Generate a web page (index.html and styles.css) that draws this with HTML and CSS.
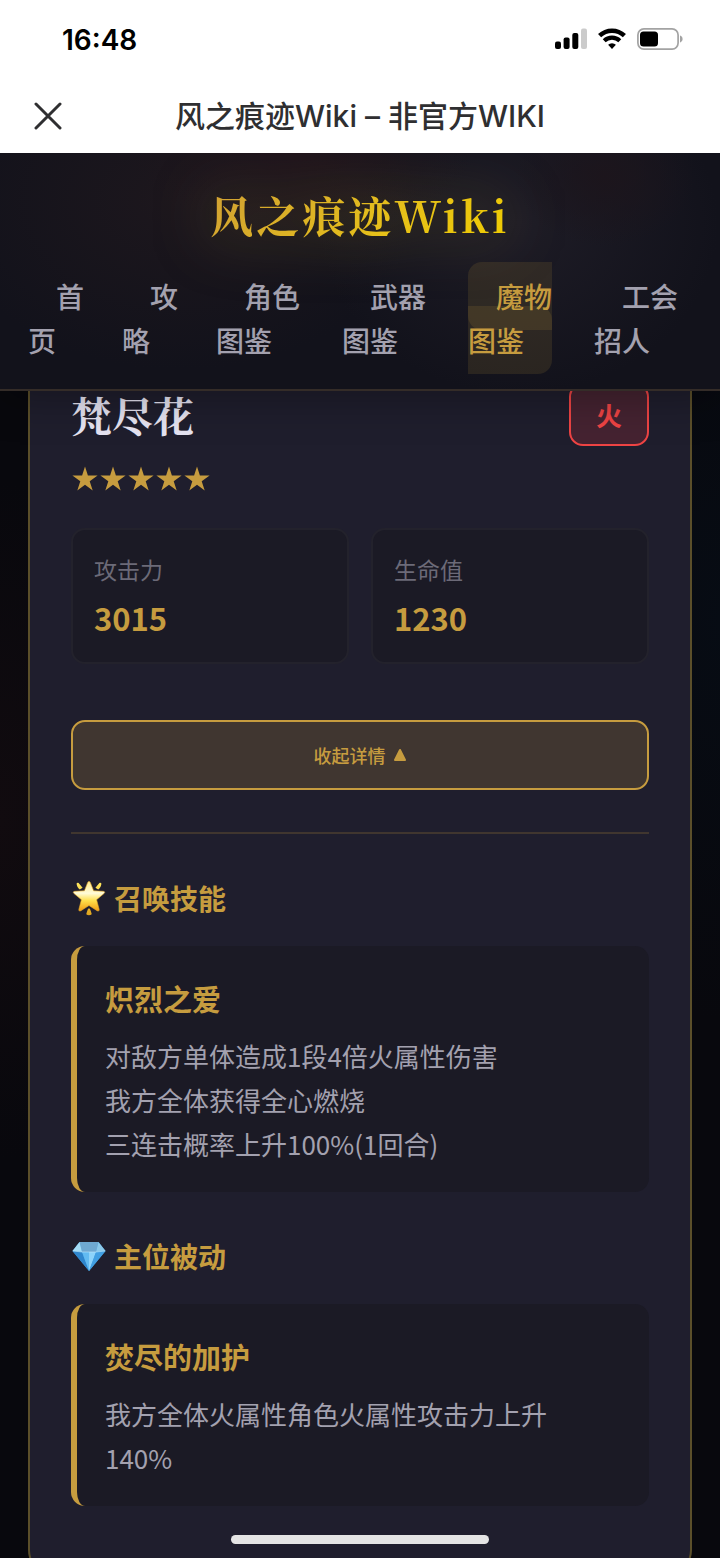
FILE: index.html
```html
<!DOCTYPE html>
<html lang="zh-CN">
<head>
<meta charset="utf-8">
<meta name="viewport" content="width=device-width, initial-scale=1">
<title>风之痕迹Wiki – 非官方WIKI</title>
<link rel="stylesheet" href="styles.css">
</head>
<body>
<div class="shell">
  <div class="status-bar">
    <span class="clock">16:48</span>
    <div class="indicators">
      <svg class="signal" width="32" height="22" viewBox="0 0 32 22" aria-hidden="true">
        <rect x="0" y="13.500" width="6" height="7.500" rx="2"/>
        <rect x="8.600" y="9.500" width="6" height="11.500" rx="2"/>
        <rect x="17.300" y="5" width="6" height="16" rx="2"/>
        <rect x="26" y="0.500" width="6" height="20.500" rx="2" fill="#cbcbcb"/>
      </svg>
      <svg class="wifi" width="28" height="22" viewBox="0 0 28 22" fill="none" stroke="#000" aria-hidden="true">
        <path d="M1.600 7.600a18 18 0 0 1 24.800 0" stroke-width="4.500"/>
        <path d="M6.200 12.700a11.300 11.300 0 0 1 15.600 0" stroke-width="4.200"/>
        <path d="M14 21l-3.900-4.200a5.700 5.700 0 0 1 7.800 0z" fill="#000" stroke="none"/>
      </svg>
      <svg class="battery" width="46" height="22" viewBox="0 0 46 22" aria-hidden="true">
        <rect x="0.900" y="0.900" width="40.200" height="20.200" rx="6" fill="none" stroke="#a3a3a3" stroke-width="1.700"/>
        <rect x="3" y="3.500" width="18" height="15" rx="3.500"/>
        <path d="M43 7.500c1.600.6 2.600 1.900 2.600 3.500s-1 2.900-2.600 3.500z" fill="#a3a3a3"/>
      </svg>
    </div>
  </div>

  <div class="title-bar">
    <button class="close" type="button" aria-label="关闭">
      <svg width="28" height="28" viewBox="0 0 28 28" aria-hidden="true">
        <path d="M2 2l24 24M26 2L2 26" stroke="#2f2f31" stroke-width="3" stroke-linecap="round"/>
      </svg>
    </button>
    <p class="page-name">风之痕迹Wiki – 非官方WIKI</p>
  </div>

  <header class="site-header">
    <h1 class="logo">风之痕迹Wiki</h1>
    <nav>
      <ul class="nav-list">
        <li><a href="#home">首页</a></li>
        <li><a href="#guide">攻略</a></li>
        <li><a href="#roles">角色图鉴</a></li>
        <li><a href="#weapons">武器图鉴</a></li>
        <li><a class="active" href="#monsters">魔物图鉴</a></li>
        <li><a href="#guild">工会招人</a></li>
      </ul>
    </nav>
  </header>

  <main class="content">
    <article class="card">
      <div class="card-head">
        <h2 class="name">梵尽花</h2>
        <span class="element">火</span>
      </div>
      <div class="stars" role="img" aria-label="五星">
        <svg viewBox="0 0 26 26"><path d="M13 .6l2.900 9h9.700l-7.900 5.600 3 9.200-7.700-5.700-7.700 5.700 3-9.200L.4 9.600h9.700z"/></svg>
        <svg viewBox="0 0 26 26"><path d="M13 .6l2.900 9h9.700l-7.900 5.600 3 9.200-7.700-5.700-7.700 5.700 3-9.200L.4 9.600h9.700z"/></svg>
        <svg viewBox="0 0 26 26"><path d="M13 .6l2.900 9h9.700l-7.900 5.600 3 9.200-7.700-5.700-7.700 5.700 3-9.200L.4 9.600h9.700z"/></svg>
        <svg viewBox="0 0 26 26"><path d="M13 .6l2.900 9h9.700l-7.900 5.600 3 9.200-7.700-5.700-7.700 5.700 3-9.200L.4 9.600h9.700z"/></svg>
        <svg viewBox="0 0 26 26"><path d="M13 .6l2.900 9h9.700l-7.900 5.600 3 9.200-7.700-5.700-7.700 5.700 3-9.200L.4 9.600h9.700z"/></svg>
      </div>

      <dl class="stats">
        <div class="stat"><dt>攻击力</dt><dd>3015</dd></div>
        <div class="stat"><dt>生命值</dt><dd>1230</dd></div>
      </dl>

      <button class="toggle" type="button">
        收起详情
        <svg width="14" height="14" viewBox="0 0 14 14" aria-hidden="true">
          <path d="M7 2l5 10H2z" fill="currentColor" stroke="currentColor" stroke-width="2" stroke-linejoin="round"/>
        </svg>
      </button>

      <div class="details">
        <section class="group">
          <h3 class="group-title">
            <svg class="glyph" viewBox="0 0 34 36" aria-hidden="true">
              <defs>
                <linearGradient id="star-fill" x1="0" y1="0" x2="0" y2="1">
                  <stop offset="0" stop-color="#ffe98a"/>
                  <stop offset="0.400" stop-color="#fffbd8"/>
                  <stop offset="0.650" stop-color="#ffdf4a"/>
                  <stop offset="1" stop-color="#f09a14"/>
                </linearGradient>
                <linearGradient id="ray-fill" x1="0" y1="0" x2="0" y2="1">
                  <stop offset="0" stop-color="#ffe75e"/>
                  <stop offset="1" stop-color="#dfa41d"/>
                </linearGradient>
              </defs>
              <path d="M17 1.500c.7 0 1.100.4 1.400 1.200l3.200 8.100 9.600.5c1.600.1 2 1.200.8 2.200l-7.400 6.200 2.500 9.600c.4 1.500-.7 2.200-2 1.400L17 25.500l-8.100 5.200c-1.300.8-2.400.1-2-1.400l2.500-9.600L2 13.500c-1.200-1-.8-2.100.8-2.200l9.600-.5 3.200-8.100c.3-.8.700-1.200 1.400-1.200z" fill="url(#star-fill)" stroke="#e8a928" stroke-width="0.600"/>
              <path d="M4.600 3.600c.4-1 1.200-1.200 2-.5l4 4.700-2.800 1.600C5.700 8.200 4.600 5.600 4.600 3.600zM29.400 3.600c-.4-1-1.200-1.200-2-.5l-4 4.700 2.800 1.600c2.100-1.200 3.200-3.800 3.200-5.800zM17 28.500c.8 0 1.200.7 1.500 1.700l1.100 3.400c.3 1.100-.8 1.600-2.600 1.600s-2.900-.5-2.600-1.600l1.100-3.400c.3-1 .7-1.700 1.500-1.700z" fill="url(#ray-fill)"/>
            </svg>
            召唤技能
          </h3>
          <div class="skill">
            <h4>炽烈之爱</h4>
            <p>对敌方单体造成1段4倍火属性伤害<br>我方全体获得全心燃烧<br>三连击概率上升100%(1回合)</p>
          </div>
        </section>

        <section class="group">
          <h3 class="group-title">
            <svg class="glyph" viewBox="0 0 34 36" aria-hidden="true">
              <path d="M7.500 4h19L33.500 13 17 33 .5 13z" fill="#3f9fe0"/>
              <path d="M7.500 4h19L24 14H10z" fill="#6fa9d2"/>
              <path d="M7.500 4L10 14 .5 13z" fill="#a5dcf5"/>
              <path d="M26.500 4L24 14l9.500-1z" fill="#8cc9ea"/>
              <path d="M.5 13l9.500 1 7 19z" fill="#2f86cd"/>
              <path d="M10 14h14l-7 19z" fill="#62bbf2"/>
              <path d="M17 14h7l-7 19z" fill="#8dd3fa"/>
              <path d="M24 14l9.500-1L17 33z" fill="#429fe2"/>
              <path d="M.8 13l9.200 1h14l9.200-1" fill="none" stroke="#c0e8fb" stroke-width="0.600"/>
            </svg>
            主位被动
          </h3>
          <div class="skill">
            <h4>焚尽的加护</h4>
            <p>我方全体火属性角色火属性攻击力上升140%</p>
          </div>
        </section>
      </div>
    </article>
  </main>

  <div class="home-indicator"></div>
</div>
</body>
</html>
```
FILE: styles.css
```css
:root {
  --gold: #c69c3f;
  --text: #a3a1af;
  --panel: #1b1a25;
  --card: #1f1e2d;
}

* {
  box-sizing: border-box;
}

body {
  margin: 0;
  background: #08080d;
  color: var(--text);
  font-family: "Noto Sans CJK SC", sans-serif;
}

h1, h2, h3, h4, p, ul, dl, dd {
  margin: 0;
  padding: 0;
}

.shell {
  position: relative;
  display: flex;
  flex-direction: column;
  height: 100vh;
  overflow: hidden;
  background:
    radial-gradient(ellipse 180px 340px at 0 820px, #110b0f, transparent),
    radial-gradient(ellipse 180px 400px at 100% 620px, #070c14, transparent),
    #08080d;
}

.status-bar {
  flex: none;
  display: flex;
  align-items: center;
  justify-content: space-between;
  height: 78px;
  padding: 0 37px 0 62px;
  background: #fff;
  color: #000;
}

.clock {
  padding-top: 2px;
  font: 600 28px/34px Inter, sans-serif;
}

.indicators {
  display: flex;
  align-items: center;
  gap: 11px;
}

.title-bar {
  position: relative;
  z-index: 2;
  flex: none;
  display: grid;
  grid-template-columns: 1fr auto 1fr;
  align-items: center;
  height: 75px;
  padding: 0 34px;
  background: #fff;
  color: #2f2f31;
}

.close {
  justify-self: start;
  display: flex;
  padding: 0;
  border: 0;
  background: none;
}

.page-name {
  font: 500 30px/44px Inter, "Noto Sans CJK SC", sans-serif;
}

.site-header {
  position: relative;
  z-index: 1;
  flex: none;
  padding: 28px 28px 27px;
  border-bottom: 2px solid #342c28;
  background:
    radial-gradient(ellipse 170px 80px at 42% 0, #20151c, transparent),
    radial-gradient(ellipse 90px 70px at 84% 10%, #1c151c, transparent),
    radial-gradient(ellipse 240px 170px at 25% 20%, #1d171d, transparent),
    radial-gradient(ellipse 200px 170px at 72% 30%, #1e1c26, transparent),
    #12121b;
  box-shadow: 0 8px 40px rgba(0, 0, 0, 0.3);
}

.logo {
  width: fit-content;
  margin: 0 auto;
  background: linear-gradient(135deg, #cf9f35, #e6c01a 60%, #f0cd00);
  background-clip: text;
  color: transparent;
  filter: drop-shadow(0 0 30px rgba(212, 175, 55, 0.5));
  font: 700 43px/68px "Noto Serif CJK SC", "Noto Serif SC", "Liberation Serif", "Noto Sans CJK SC", serif;
  letter-spacing: 3px;
}

.nav-list {
  display: grid;
  grid-template-columns: 58fr 58fr 90fr 90fr 90fr 98fr;
  column-gap: 36px;
  padding: 25px 0 0;
  list-style: none;
  font-size: 28px;
  font-weight: 500;
  line-height: 44px;
}

.nav-list a {
  padding: 14px 28px;
  border-radius: 14px;
  color: var(--text);
  text-decoration: none;
}

.nav-list .active {
  background: rgba(201, 160, 63, 0.13);
  color: var(--gold);
}

.content {
  flex: 1;
  min-height: 0;
  margin-top: -21px;
  padding: 0 28px;
  overflow: hidden;
}

.card {
  padding: 13px 41px 70px;
  border: 2px solid #5b4f2a;
  border-top: 0;
  border-radius: 0 0 28px 28px;
  background: var(--card);
}

.card-head {
  display: flex;
  align-items: center;
  justify-content: space-between;
}

.name {
  color: #e6e4f2;
  font: 700 41px/62px "Noto Serif CJK SC", "Noto Serif SC", "Liberation Serif", "Noto Sans CJK SC", serif;
}

.element {
  padding: 8px 25px;
  border: 2px solid #ef4444;
  border-radius: 14px;
  background: #452331;
  color: #ef4444;
  font-size: 26px;
  font-weight: 700;
  line-height: 43px;
}

.stars {
  display: flex;
  gap: 2px;
  padding: 20px 0 36px 1px;
  fill: var(--gold);
}

.stars svg {
  width: 26px;
  height: 26px;
}

.stats {
  display: grid;
  grid-template-columns: 1fr 1fr;
  gap: 22px;
}

.stat {
  padding: 20px 21px;
  border: 2px solid #23222c;
  border-radius: 14px;
  background: var(--panel);
}

.stat dt {
  color: #6c6a78;
  font-size: 23px;
  line-height: 38px;
}

.stat dd {
  padding-top: 6px;
  color: var(--gold);
  font-size: 31px;
  font-weight: 700;
  line-height: 48px;
}

.toggle {
  display: flex;
  align-items: center;
  justify-content: center;
  gap: 7px;
  width: 100%;
  margin: 56px 0 42px;
  padding: 18px;
  border: 2px solid var(--gold);
  border-radius: 14px;
  background: #403630;
  color: var(--gold);
  font: 500 18px/30px "Noto Sans CJK SC", sans-serif;
}

.details {
  display: grid;
  gap: 42px;
  padding-top: 42px;
  border-top: 2px solid #40362f;
}

.group-title {
  display: flex;
  align-items: center;
  gap: 8px;
  padding-left: 1px;
  color: var(--gold);
  font-size: 28px;
  font-weight: 700;
  line-height: 44px;
}

.glyph {
  width: 34px;
  height: 36px;
}

.skill {
  margin-top: 26px;
  padding: 28px 40px 26px 28px;
  border-left: 6px solid var(--gold);
  border-radius: 14px;
  background: var(--panel);
}

.skill h4 {
  padding-bottom: 12px;
  color: var(--gold);
  font-size: 29px;
  font-weight: 700;
  line-height: 48px;
}

.skill p {
  font-size: 26px;
  line-height: 44px;
}

.home-indicator {
  position: absolute;
  bottom: 14px;
  left: 50%;
  z-index: 2;
  width: 258px;
  height: 9px;
  border-radius: 5px;
  background: #e4e4e4;
  transform: translateX(-50%);
}
```
